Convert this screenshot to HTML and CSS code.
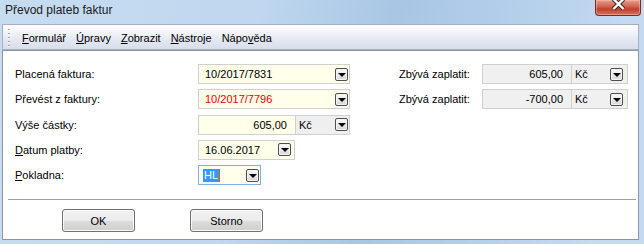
FILE: index.html
```html
<!DOCTYPE html>
<html lang="cs">
<head>
<meta charset="utf-8">
<title>Převod plateb faktur</title>
<link rel="stylesheet" href="styles.css">
</head>
<body>
<div class="window">
  <div class="titlebar">
    <span class="title">Převod plateb faktur</span>
    <span class="close">
      <svg width="44" height="14" viewBox="0 0 44 14">
        <path d="M17.5 -1 L27.5 9 M27.5 -1 L17.5 9" stroke="#3a2424" stroke-width="4.4" fill="none"/>
        <path d="M17.5 -1 L27.5 9 M27.5 -1 L17.5 9" stroke="#ffffff" stroke-width="2.4" fill="none"/>
      </svg>
    </span>
  </div>
  <div class="menubar">
    <span class="grip"></span>
    <span class="menu"><u>F</u>ormulář</span>
    <span class="menu"><u>Ú</u>pravy</span>
    <span class="menu"><u>Z</u>obrazit</span>
    <span class="menu"><u>N</u>ástroje</span>
    <span class="menu">Nápo<u>v</u>ěda</span>
  </div>
  <div class="panel">
    <div class="form">
      <span class="lbl">Placená faktura:</span>
      <div class="combo wide"><span class="val">10/2017/7831</span><span class="dd"></span></div>
      <span></span>
      <span class="lbl">Zbývá zaplatit:</span>
      <div class="ro"><span class="ro-amt">605,00</span><span class="ro-cur"><span class="val">Kč</span><span class="dd"></span></span></div>

      <span class="lbl">Převést z faktury:</span>
      <div class="combo wide"><span class="val red">10/2017/7796</span><span class="dd"></span></div>
      <span></span>
      <span class="lbl">Zbývá zaplatit:</span>
      <div class="ro"><span class="ro-amt">-700,00</span><span class="ro-cur"><span class="val">Kč</span><span class="dd"></span></span></div>

      <span class="lbl">Výše částky:</span>
      <div class="split"><span class="amt">605,00</span><span class="cur"><span class="val">Kč</span><span class="dd"></span></span></div>
      <span class="rest"></span>

      <span class="lbl"><u>D</u>atum platby:</span>
      <div class="combo date"><span class="val">16.06.2017</span><span class="dd"></span></div>
      <span class="rest"></span>

      <span class="lbl"><u>P</u>okladna:</span>
      <div class="combo hl"><span class="sel">HL</span><span class="caret"></span><span class="val"></span><span class="dd"></span></div>
      <span class="rest"></span>
    </div>
    <div class="sep"></div>
    <div class="buttons">
      <span class="btn">OK</span>
      <span class="btn">Storno</span>
    </div>
  </div>
</div>
</body>
</html>
```
FILE: styles.css
```css
* { box-sizing: border-box; }
html, body { margin: 0; padding: 0; }
body {
  width: 644px;
  height: 244px;
  overflow: hidden;
  font-family: "Liberation Sans", Arial, sans-serif;
  font-size: 11px;
  color: #000;
}
u { text-decoration: underline; text-underline-offset: 1px; }

.window {
  width: 644px;
  height: 244px;
  display: flex;
  flex-direction: column;
  background: linear-gradient(100deg, #c6dcf1 0%, #bfd7ef 38%, #a8c6e4 58%, #b1cdea 72%, #c3daf0 92%);
}

.titlebar {
  height: 24px;
  flex: none;
  display: flex;
  justify-content: space-between;
  align-items: flex-start;
}
.title {
  font-size: 12px;
  line-height: 14px;
  padding: 3px 0 0 5px;
  color: #1a1a1a;
}
.close {
  width: 46px;
  height: 16px;
  margin-right: 3px;
  border: 1px solid #7a2a22;
  border-top: none;
  border-radius: 0 0 4px 4px;
  background: linear-gradient(#e6a08f 0%, #d0614c 45%, #bf3f2c 60%, #d27462 100%);
  display: flex;
  justify-content: center;
  align-items: flex-start;
  box-shadow: inset 0 0 0 1px rgba(255, 200, 190, 0.45);
}
.close svg { display: block; }

.menubar {
  height: 26px;
  flex: none;
  margin: 0 5px 0 2px;
  border: 1px solid #a7afbd;
  background: linear-gradient(#fdfdfe 0%, #f4f6fa 25%, #e4e8f2 60%, #d9deec 100%);
  display: flex;
  align-items: center;
  padding: 2px 0 0 5px;
}
.grip {
  width: 2px;
  height: 19px;
  margin-right: 12px;
  background: repeating-linear-gradient(#9aa3b4 0 1px, #ffffff 1px 2px, transparent 2px 4px);
}
.menu { margin-right: 10px; line-height: 14px; }

.panel {
  flex: 1;
  margin: 0 5px 4px 2px;
  border: 1px solid #8d96a4;
  background: #fff;
  padding: 13px 2px 0 5px;
  display: flex;
  flex-direction: column;
}

.form {
  margin-left: 7px;
  display: grid;
  grid-template-columns: 183px 152px 49px 83px 146px;
  grid-auto-rows: 20px;
  row-gap: 5.25px;
  align-items: center;
}
.lbl { line-height: 14px; }
.rest { grid-column: 3 / 6; }

.combo {
  height: 20px;
  display: flex;
  align-items: center;
  border: 1px solid #d0d0d0;
  background: #ffffea;
  padding: 0 1px 0 6px;
}
.combo.wide { width: 152px; }
.combo.date { width: 97px; padding-right: 3px; }
.combo.hl { width: 63px; border-color: #7db2e6; padding-left: 4px; padding-right: 1px; }
.val { flex: 1; line-height: 14px; white-space: nowrap; }
.red { color: #f00000; }

.dd {
  width: 13px;
  height: 13px;
  flex: none;
  border: 1px solid #4e4e4e;
  border-radius: 2px;
  background: linear-gradient(#fbfbfb, #d6d6d6);
  display: flex;
  align-items: center;
  justify-content: center;
  box-shadow: inset 0 0 0 1px #f4f4f4;
}
.dd::after {
  content: "";
  width: 0;
  height: 0;
  border-top: 4px solid #000;
  border-left: 4px solid transparent;
  border-right: 4px solid transparent;
  margin-top: 1px;
}

.sel {
  background: #3399ff;
  color: #fff;
  line-height: 13px;
  padding: 0 1px;
}
.caret { width: 1px; height: 13px; background: #c8661c; flex: none; }

.split { display: flex; height: 20px; width: 152px; }
.amt {
  width: 98px;
  border: 1px solid #d0d0d0;
  background: #ffffea;
  text-align: right;
  padding-right: 8px;
  line-height: 18px;
}
.cur {
  width: 54px;
  border: 1px solid #d0d0d0;
  border-left: none;
  background: #efefef;
  display: flex;
  align-items: center;
  padding: 0 1px 0 3px;
}

.ro { display: flex; height: 20px; width: 146px; }
.ro-amt {
  width: 90px;
  border: 1px solid #cfcfcf;
  background: #f0f0f0;
  text-align: right;
  padding-right: 8px;
  line-height: 18px;
}
.ro-cur {
  width: 56px;
  border: 1px solid #cfcfcf;
  border-left: none;
  background: #f0f0f0;
  display: flex;
  align-items: center;
  padding: 0 4px 0 3px;
}

.sep {
  height: 1px;
  background: #a0a0a0;
  margin-top: 14px;
}

.buttons {
  display: flex;
  gap: 55px;
  margin: 9px 0 0 54px;
}
.btn {
  width: 73px;
  height: 23px;
  border: 1px solid #707070;
  border-radius: 3px;
  background: linear-gradient(#f2f2f2 0%, #ebebeb 50%, #dddddd 51%, #cfcfcf 100%);
  box-shadow: inset 0 0 0 1px #fbfbfb;
  display: flex;
  align-items: center;
  justify-content: center;
  line-height: 14px;
}
```
